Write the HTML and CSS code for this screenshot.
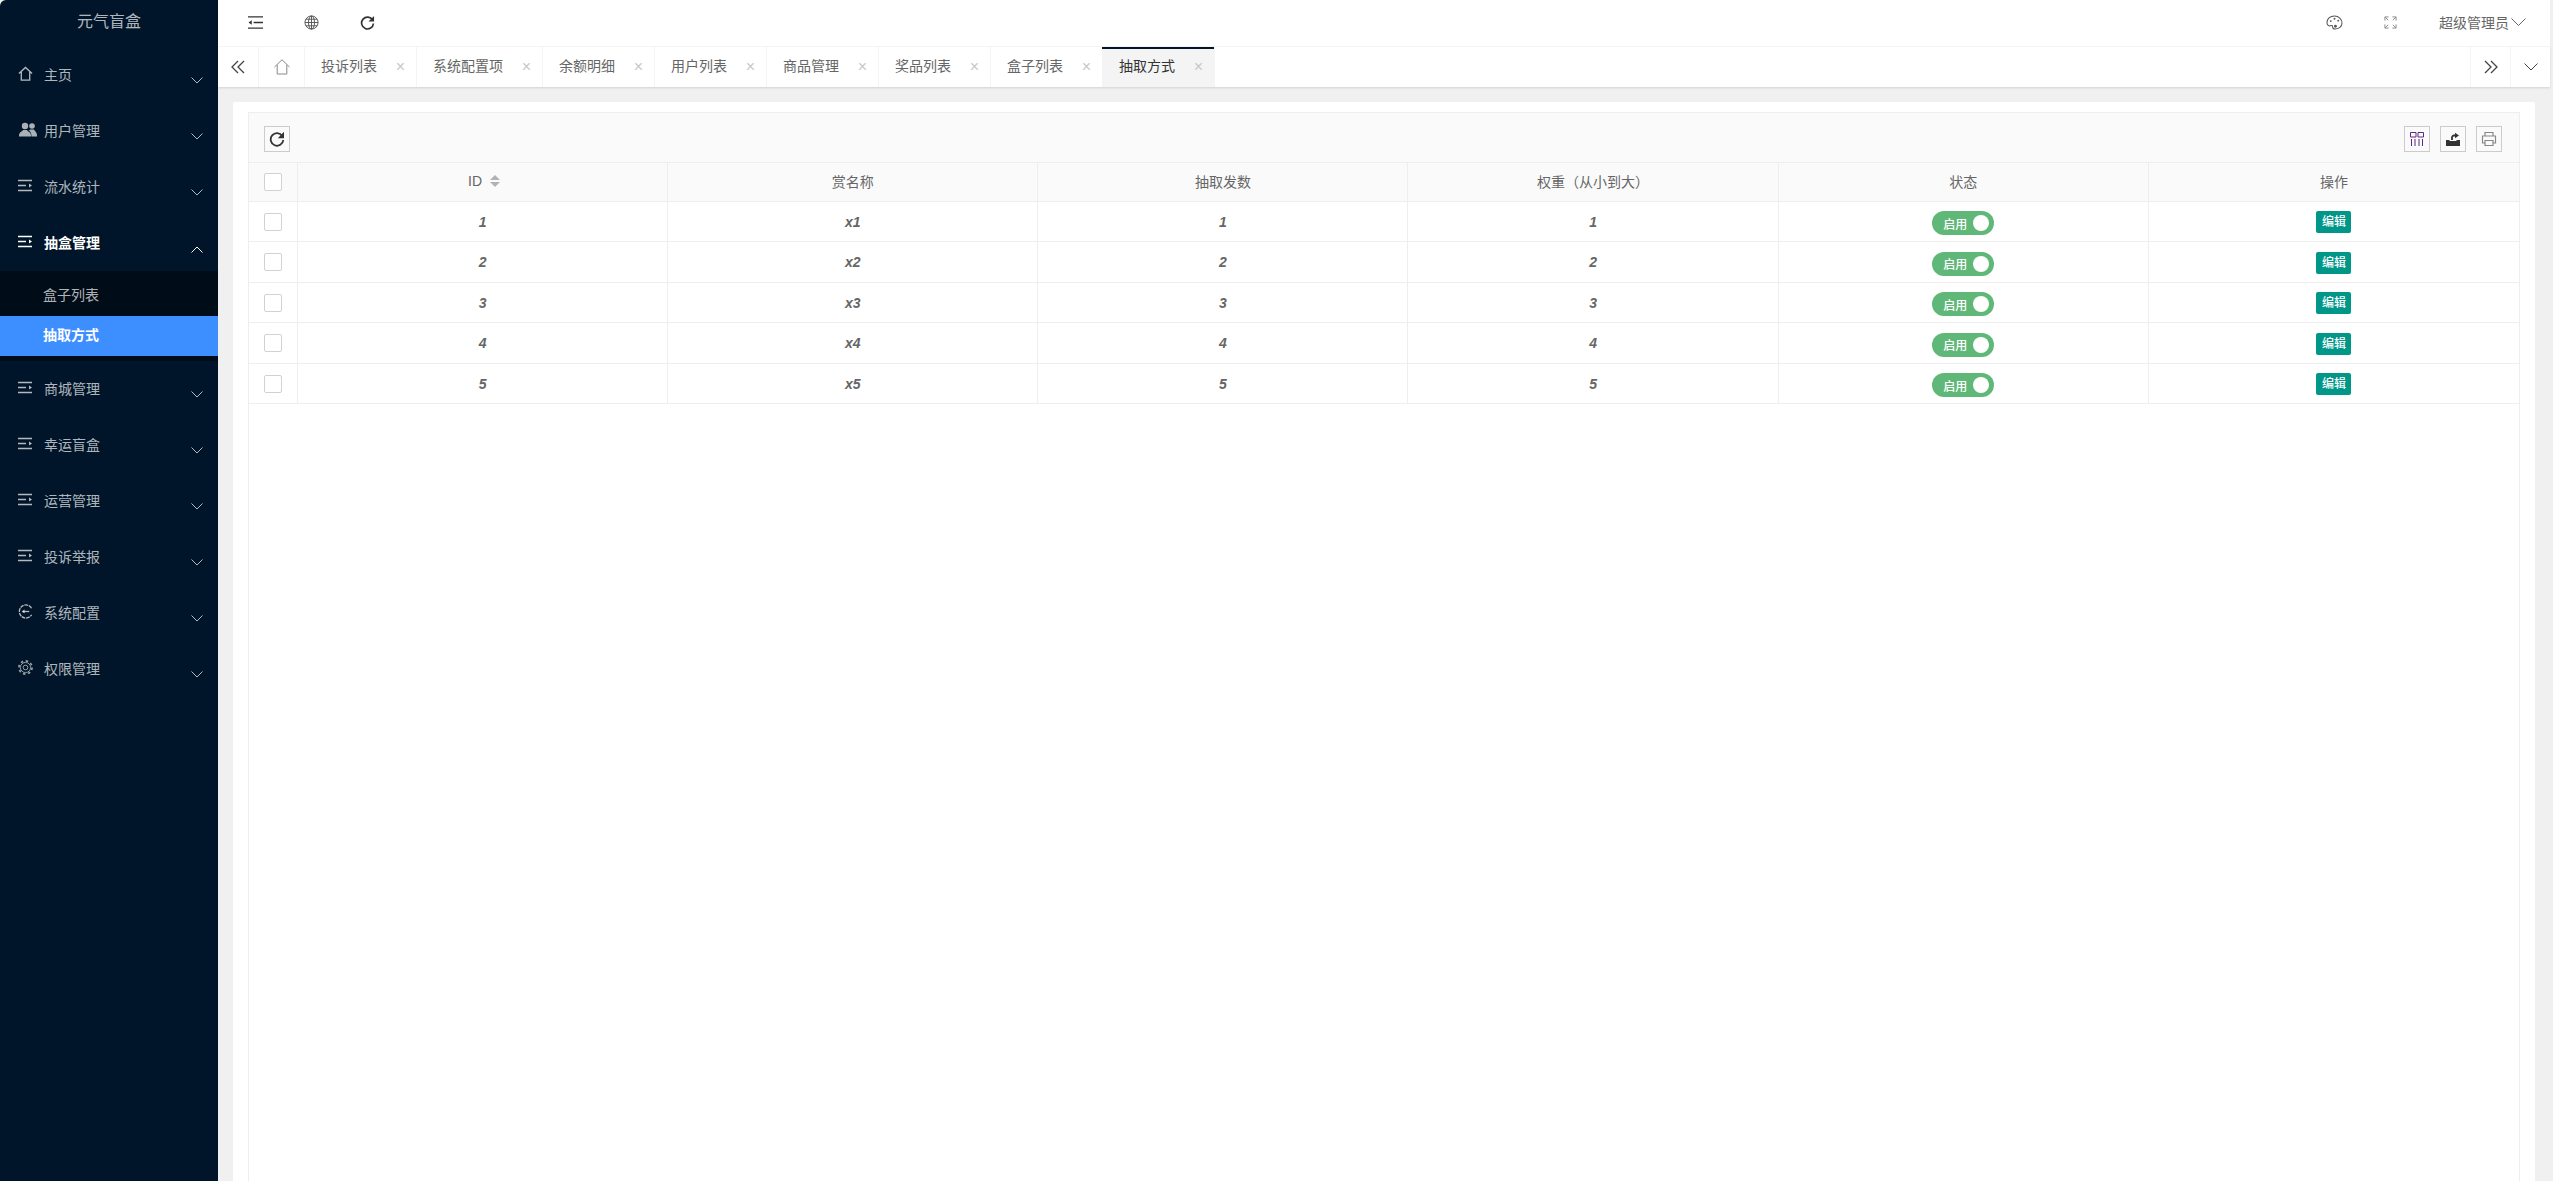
FILE: index.html
```html
<!DOCTYPE html>
<html lang="zh-CN">
<head>
    <meta charset="UTF-8">
    <title>元气盲盒</title>
    <link rel="stylesheet" href="styles.css">
</head>
<body>

    <!-- Left menu -->
    <div class="side">
        <div class="logo">元气盲盒</div>
        <ul class="nav">
            <li class="nav-item">
                <svg class="nav-icon" viewBox="0 0 16 16"><path d="M1 8 8 1.500 15 8M3.500 6.500V15h9V6.500" /></svg>
                <span>主页</span>
                <svg class="arrow" viewBox="0 0 12 7"><path d="M.5.5 6 6 11.500.5" /></svg>
            </li>
            <li class="nav-item">
                <svg class="nav-icon users" viewBox="0 0 18 14"><circle class="solid" cx="13" cy="3.500" r="2.800" /><path class="solid" d="M11 7h4c.5 1.500 3 2.500 3 6v1h-5.500c0-3-1-5-2.500-6Z" /><circle class="solid" cx="6" cy="3.500" r="3.200" /><path class="solid" d="M4 7.500h4c.5 1.500 4 2 4 5.500v1H0v-1c0-3.500 3.500-4 4-5.500Z" /></svg>
                <span>用户管理</span>
                <svg class="arrow" viewBox="0 0 12 7"><path d="M.5.5 6 6 11.500.5" /></svg>
            </li>
            <li class="nav-item">
                <svg class="nav-icon" viewBox="0 0 15 15"><path d="M0 2.500h14M0 7.500h8M0 12.500h14" /><path class="solid" d="m11 5.500 3 2-3 2Z" /></svg>
                <span>流水统计</span>
                <svg class="arrow" viewBox="0 0 12 7"><path d="M.5.5 6 6 11.500.5" /></svg>
            </li>
            <li class="nav-item open">
                <svg class="nav-icon" viewBox="0 0 15 15"><path d="M0 2.500h14M0 7.500h8M0 12.500h14" /><path class="solid" d="m11 5.500 3 2-3 2Z" /></svg>
                <span>抽盒管理</span>
                <svg class="arrow arrow-up" viewBox="0 0 12 7"><path d="M.5 6.500 6 1l5.500 5.500" /></svg>
            </li>
            <li class="nav-child">
                <div class="child-item">盒子列表</div>
                <div class="child-item active">抽取方式</div>
            </li>
            <li class="nav-item">
                <svg class="nav-icon" viewBox="0 0 15 15"><path d="M0 2.500h14M0 7.500h8M0 12.500h14" /><path class="solid" d="m11 5.500 3 2-3 2Z" /></svg>
                <span>商城管理</span>
                <svg class="arrow" viewBox="0 0 12 7"><path d="M.5.5 6 6 11.500.5" /></svg>
            </li>
            <li class="nav-item">
                <svg class="nav-icon" viewBox="0 0 15 15"><path d="M0 2.500h14M0 7.500h8M0 12.500h14" /><path class="solid" d="m11 5.500 3 2-3 2Z" /></svg>
                <span>幸运盲盒</span>
                <svg class="arrow" viewBox="0 0 12 7"><path d="M.5.5 6 6 11.500.5" /></svg>
            </li>
            <li class="nav-item">
                <svg class="nav-icon" viewBox="0 0 15 15"><path d="M0 2.500h14M0 7.500h8M0 12.500h14" /><path class="solid" d="m11 5.500 3 2-3 2Z" /></svg>
                <span>运营管理</span>
                <svg class="arrow" viewBox="0 0 12 7"><path d="M.5.5 6 6 11.500.5" /></svg>
            </li>
            <li class="nav-item">
                <svg class="nav-icon" viewBox="0 0 15 15"><path d="M0 2.500h14M0 7.500h8M0 12.500h14" /><path class="solid" d="m11 5.500 3 2-3 2Z" /></svg>
                <span>投诉举报</span>
                <svg class="arrow" viewBox="0 0 12 7"><path d="M.5.5 6 6 11.500.5" /></svg>
            </li>
            <li class="nav-item">
                <svg class="nav-icon" viewBox="0 0 16 16"><path stroke-dasharray="4 .8" d="M14.500 4.500A7 7 0 1 0 14.500 11.500" /><path d="M5 8h7" /><path class="solid" d="m7 5.800-3 2.200 3 2.200Z" /></svg>
                <span>系统配置</span>
                <svg class="arrow" viewBox="0 0 12 7"><path d="M.5.5 6 6 11.500.5" /></svg>
            </li>
            <li class="nav-item">
                <svg class="nav-icon gear" viewBox="0 0 16 16"><circle cx="8" cy="8" r="7" stroke-width="1.800" stroke-dasharray="2.700 2.800" /><circle cx="8" cy="8" r="5.400" /><circle cx="8" cy="8" r="2.500" /></svg>
                <span>权限管理</span>
                <svg class="arrow" viewBox="0 0 12 7"><path d="M.5.5 6 6 11.500.5" /></svg>
            </li>
        </ul>
    </div>

    <div class="main">
        <!-- Top bar -->
        <div class="header">
            <div class="header-left">
                <svg class="head-icon" viewBox="0 0 16 14"><path d="M0 1h16M6 7h10M0 13h16" /><path class="solid" d="M4 4.500.5 7 4 9.500Z" /></svg>
                <svg class="head-icon globe" viewBox="0 0 16 16"><circle cx="8" cy="8" r="7" /><ellipse cx="8" cy="8" rx="3.200" ry="7" /><path d="M8 1v14M1 8h14M2 4.500h12M2 11.500h12" /></svg>
                <svg class="head-icon" viewBox="0 0 16 16"><path class="thick" d="M13.500 5.500A6.300 6.300 0 1 0 14.300 9" /><path class="solid" d="M15 1v6H9Z" /></svg>
            </div>
            <div class="header-right">
                <svg class="head-icon palette" viewBox="0 0 18 16"><path d="M9 1C4 1 1 4.500 1 8c0 3 2 4 3.500 3.500S7 11 7 12.500 8 15 9.500 15c4 0 7.500-2.500 7.500-6.500C17 4.500 13.500 1 9 1Z" /><circle class="solid" cx="5" cy="6.500" r="1" /><circle class="solid" cx="9" cy="4" r="1" /><circle class="solid" cx="13" cy="6" r="1" /><circle class="solid" cx="10" cy="12" r="1.500" /></svg>
                <svg class="head-icon full" viewBox="0 0 14 14"><path d="M1 5V1h4M13 5V1H9M1 9v4h4M13 9v4H9M1 1l3.500 3.500M13 1 9.500 4.500M1 13l3.500-3.500M13 13 9.500 9.500" /></svg>
                <span class="user-name">超级管理员</span>
                <svg class="user-arrow" viewBox="0 0 15 8"><path d="M.5.5 7.500 7.500 14.500.5" /></svg>
            </div>
        </div>

        <!-- Opened tabs -->
        <div class="tabs">
            <div class="tab-btn">
                <svg class="double" viewBox="0 0 14 14"><path d="M7 1 1 7l6 6M13 1 7 7l6 6" /></svg>
            </div>
            <div class="tab-home">
                <svg class="home" viewBox="0 0 16 16"><path d="M.5 8 8 .8 15.500 8M3.200 6V15h9.600V6" /></svg>
            </div>
            <div class="tab">投诉列表<span class="close">×</span></div>
            <div class="tab">系统配置项<span class="close">×</span></div>
            <div class="tab">余额明细<span class="close">×</span></div>
            <div class="tab">用户列表<span class="close">×</span></div>
            <div class="tab">商品管理<span class="close">×</span></div>
            <div class="tab">奖品列表<span class="close">×</span></div>
            <div class="tab">盒子列表<span class="close">×</span></div>
            <div class="tab current">抽取方式<span class="close">×</span></div>
            <div class="tab-space"></div>
            <div class="tab-btn border-left">
                <svg class="double" viewBox="0 0 14 14"><path d="m1 1 6 6-6 6M7 1l6 6-6 6" /></svg>
            </div>
            <div class="tab-btn border-left">
                <svg class="down" viewBox="0 0 14 8"><path d="M.5.500 7 7 13.500.5" /></svg>
            </div>
        </div>

        <div class="content">
            <div class="card">
                <div class="table-box">
                    <div class="toolbar">
                        <div class="tool">
                            <svg class="tool-icon" viewBox="0 0 16 16"><path class="thick" d="M13.300 5A6.300 6.300 0 1 0 14.300 9" /><path class="solid" d="M15 .8v6.400H8.800Z" /></svg>
                        </div>
                        <div class="tool-right">
                            <div class="tool">
                                <svg class="tool-icon cols" viewBox="0 0 14 14"><path d="M.5.500h5.500v4.500H.5zM8 .500h5.500v4.500H8zM1.500 7v7M5 7v7M9 7v7M12.500 7v7" /></svg>
                            </div>
                            <div class="tool">
                                <svg class="tool-icon" viewBox="0 0 16 16"><path class="solid" d="M1 9h3l1 1h6l1-1h3v6H1Z" /><path class="thick" d="M7 9V6.500c0-1 1-2 2-2h2" /><path class="solid" d="M10 1.800 14 4.500 10 7.200Z" /></svg>
                            </div>
                            <div class="tool">
                                <svg class="tool-icon print" viewBox="0 0 16 16"><path d="M4 5V1.500h8V5M4 12H1.500V5h13v7H12M4 9.500h8v5H4Z" /></svg>
                            </div>
                        </div>
                    </div>
                    <table class="grid">
                        <thead>
                            <tr>
                                <th class="check"><span class="box"></span></th>
                                <th><span class="id-title">ID</span><span class="sort"><i class="up"></i><i class="dn"></i></span></th>
                                <th>赏名称</th>
                                <th>抽取发数</th>
                                <th>权重（从小到大）</th>
                                <th>状态</th>
                                <th>操作</th>
                            </tr>
                        </thead>
                        <tbody>
                            <tr>
                                <td class="check"><span class="box"></span></td>
                                <td>1</td><td>x1</td><td>1</td><td>1</td>
                                <td><span class="switch">启用<i></i></span></td>
                                <td><span class="edit">编辑</span></td>
                            </tr>
                            <tr>
                                <td class="check"><span class="box"></span></td>
                                <td>2</td><td>x2</td><td>2</td><td>2</td>
                                <td><span class="switch">启用<i></i></span></td>
                                <td><span class="edit">编辑</span></td>
                            </tr>
                            <tr>
                                <td class="check"><span class="box"></span></td>
                                <td>3</td><td>x3</td><td>3</td><td>3</td>
                                <td><span class="switch">启用<i></i></span></td>
                                <td><span class="edit">编辑</span></td>
                            </tr>
                            <tr>
                                <td class="check"><span class="box"></span></td>
                                <td>4</td><td>x4</td><td>4</td><td>4</td>
                                <td><span class="switch">启用<i></i></span></td>
                                <td><span class="edit">编辑</span></td>
                            </tr>
                            <tr>
                                <td class="check"><span class="box"></span></td>
                                <td>5</td><td>x5</td><td>5</td><td>5</td>
                                <td><span class="switch">启用<i></i></span></td>
                                <td><span class="edit">编辑</span></td>
                            </tr>
                        </tbody>
                    </table>
                </div>
            </div>
        </div>
    </div>

</body>
</html>
```

FILE: styles.css
```css
* {
    box-sizing: border-box;
}

html, body {
    height: 100%;
}

body {
    display: flex;
    margin: 0;
    overflow: hidden;
    background: #f0f0f0;
    color: #666;
    font-family: "Liberation Sans", "Noto Sans CJK SC", sans-serif;
    font-size: 14px;
}

svg {
    display: block;
    fill: none;
    stroke: currentColor;
    stroke-width: 1;
}

svg .solid {
    fill: currentColor;
    stroke: none;
}

svg .thick {
    stroke-width: 1.8;
}

/* Left menu */
.side {
    flex: 0 0 218px;
    background: #001529;
    color: rgba(255, 255, 255, 0.7);
    border-top-left-radius: 6px;
}

.logo {
    height: 47px;
    padding-top: 9px;
    line-height: 25px;
    font-size: 16px;
    text-align: center;
}

.nav {
    margin: 0;
    padding: 0;
    list-style: none;
}

.nav-item {
    position: relative;
    display: flex;
    align-items: center;
    height: 56px;
    padding-left: 18px;
    padding-bottom: 3px;
}

.nav-item.open {
    color: #fff;
    font-weight: bold;
}

.nav-icon {
    flex: none;
    width: 15px;
    height: 15px;
    margin-right: 11px;
    stroke-width: 1.4;
}

.nav-icon.users {
    width: 18px;
    margin-left: 1px;
    margin-right: 7px;
    opacity: 0.95;
}

.nav-icon.gear {
    stroke-width: 1;
    opacity: 0.85;
}

.arrow {
    position: absolute;
    left: 191px;
    top: 30px;
    width: 12px;
    height: 7px;
}

.arrow-up {
    top: 31px;
}

.nav-child {
    padding: 5px 0;
    background: #000c17;
}

.child-item {
    height: 40px;
    padding-left: 43px;
    line-height: 38px;
}

.child-item.active {
    background: #3d8eff;
    color: #fff;
    font-weight: bold;
}

/* Top bar */
.main {
    flex: 1;
    display: flex;
    flex-direction: column;
    min-width: 0;
}

.header {
    display: flex;
    justify-content: space-between;
    align-items: center;
    flex: none;
    width: 2332px;
    height: 47px;
    padding: 0 24px 2px 30px;
    background: #fff;
    border-bottom: 1px solid #f6f6f6;
}

.header-left {
    display: flex;
    gap: 41px;
}

.header-right {
    display: flex;
    align-items: center;
}

.head-icon {
    width: 15px;
    height: 15px;
    color: #333;
    stroke-width: 1.4;
}

.globe {
    color: #555;
    stroke-width: 1;
}

.palette {
    width: 17px;
    color: #555;
    margin-right: 41px;
    stroke-width: 1.1;
}

.full {
    width: 13px;
    height: 13px;
    color: #888;
    margin-right: 42px;
    stroke-width: 1;
}

.user-name {
    color: #666;
}

.user-arrow {
    width: 15px;
    height: 8px;
    margin-left: 2px;
    color: #666;
}

/* Opened tabs */
.tabs {
    position: relative;
    display: flex;
    flex: none;
    width: 2332px;
    height: 40px;
    background: #fff;
    box-shadow: 0 1px 2px rgba(0, 0, 0, 0.12);
}

.tab-btn {
    display: flex;
    justify-content: center;
    align-items: center;
    width: 40px;
    color: #444;
}

.border-left {
    border-left: 1px solid #f4f4f4;
}

.double {
    width: 14px;
    height: 14px;
    stroke-width: 1.3;
}

.down {
    width: 14px;
    height: 8px;
}

.tab-home {
    display: flex;
    justify-content: center;
    align-items: center;
    width: 46px;
    border-left: 1px solid #f4f4f4;
    color: #888;
}

.home {
    width: 16px;
    height: 16px;
}

.tab {
    position: relative;
    padding-left: 16px;
    padding-right: 39px;
    border-left: 1px solid #f4f4f4;
    line-height: 38px;
    white-space: nowrap;
}

.tab.current {
    padding-left: 17px;
    background: #f4f4f4;
    color: #333;
    border-left: 0;
}

.tab.current::before {
    content: "";
    position: absolute;
    left: 0;
    right: 0;
    top: 0;
    height: 2px;
    background: #001529;
}

.close {
    position: absolute;
    right: 11px;
    top: 1px;
    color: #c8c8c8;
    font-family: "Liberation Sans", sans-serif;
    font-size: 16px;
}

.tab-space {
    flex: 1;
    border-left: 1px solid #f4f4f4;
}

/* Table card */
.content {
    flex: 1;
    display: flex;
    min-height: 0;
    padding: 15px 18px 0 15px;
}

.card {
    flex: 1;
    padding: 10px 15px 0;
    background: #fff;
    border-radius: 2px 2px 0 0;
}

.table-box {
    height: 100%;
    border: 1px solid #eee;
    border-bottom: 0;
}

.toolbar {
    display: flex;
    justify-content: space-between;
    height: 50px;
    padding: 13px 17px 0 15px;
    background: #fafafa;
    border-bottom: 1px solid #eee;
}

.tool-right {
    display: flex;
    gap: 10px;
}

.tool {
    display: flex;
    justify-content: center;
    align-items: center;
    width: 26px;
    height: 26px;
    border: 1px solid #ccc;
    color: #333;
}

.tool-icon {
    width: 16px;
    height: 16px;
}

.cols {
    width: 14px;
    height: 14px;
    color: #5c2a7e;
}

.print {
    color: #888;
    stroke-width: 1.2;
}

.grid {
    width: 100%;
    border-collapse: separate;
    border-spacing: 0;
    table-layout: fixed;
}

.grid th,
.grid td {
    padding: 0;
    text-align: center;
    border-right: 1px solid #eee;
    border-bottom: 1px solid #eee;
}

.grid th:last-child,
.grid td:last-child {
    border-right: 0;
}

.grid th {
    height: 39px;
    padding-bottom: 2px;
    background: #fafafa;
    font-weight: normal;
}

.grid td {
    height: 40px;
    font-style: italic;
    font-weight: bold;
}

.grid tbody tr:nth-child(even) td {
    height: 41px;
}

.grid .check {
    width: 49px;
}

.grid th.check {
    padding-bottom: 0;
}

.box {
    display: block;
    width: 18px;
    height: 18px;
    margin-left: 15px;
    background: #fff;
    border: 1px solid #d2d2d2;
    border-radius: 2px;
}

.id-title {
    margin-left: 3px;
    margin-right: 8px;
}

.sort {
    display: inline-block;
    width: 10px;
    height: 12px;
    vertical-align: -1px;
}

.sort i {
    display: block;
    width: 0;
    height: 0;
    border-left: 5px solid transparent;
    border-right: 5px solid transparent;
}

.sort .up {
    border-bottom: 5px solid #b2b2b2;
    margin-bottom: 2px;
}

.sort .dn {
    border-top: 5px solid #b2b2b2;
}

.switch {
    display: flex;
    align-items: center;
    width: 62px;
    height: 24px;
    margin: 3px auto 0;
    padding-left: 11px;
    background: #5fb878;
    border-radius: 12px;
    color: #fff;
    font-size: 12px;
    font-style: normal;
    font-weight: 500;
}

.switch i {
    width: 16px;
    height: 16px;
    margin-left: 6px;
    background: #fff;
    border-radius: 50%;
}

.edit {
    display: block;
    width: 35px;
    height: 22px;
    margin: 1px auto 0;
    background: #009688;
    border-radius: 2px;
    color: #fff;
    font-size: 12px;
    font-style: normal;
    font-weight: 500;
    line-height: 22px;
}
```
